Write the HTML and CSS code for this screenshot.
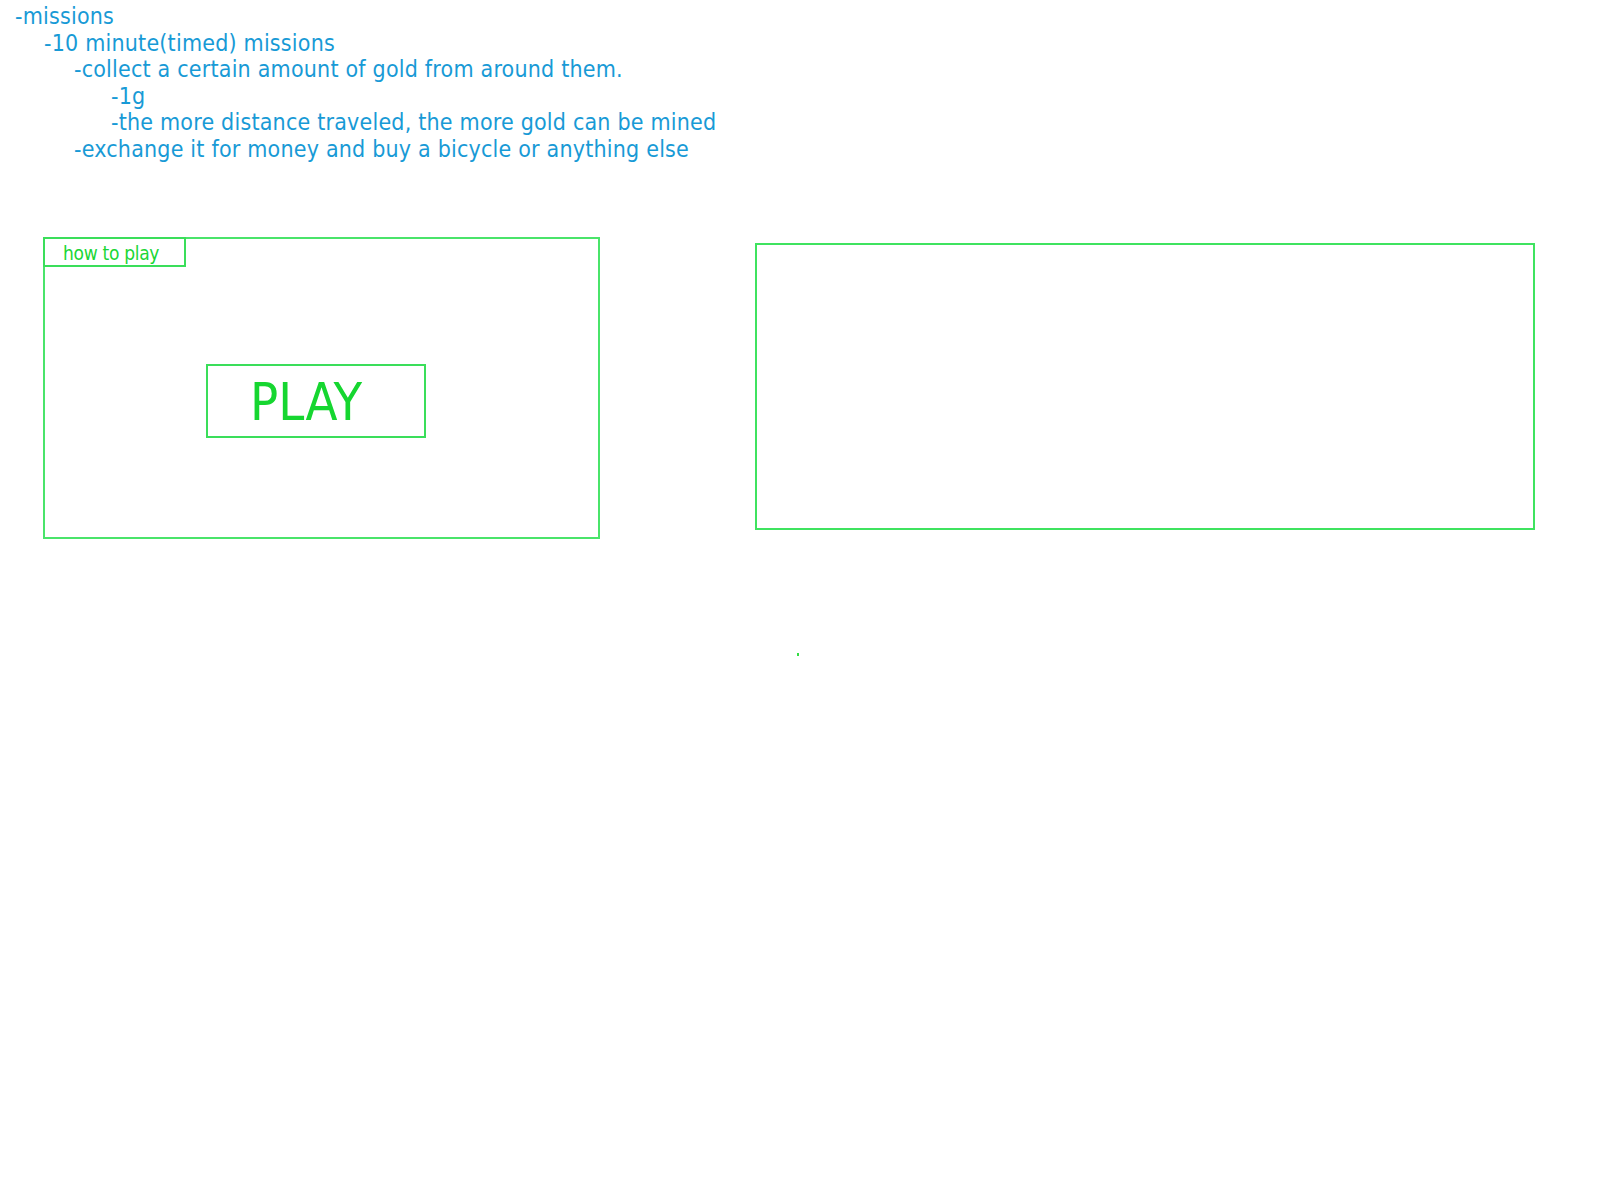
FILE: index.html
```html
<!DOCTYPE html>
<html>
<head>
<meta charset="utf-8">
<link rel="stylesheet" href="styles.css">
</head>
<body>
<div class="notes">
  <div class="l0">-missions</div>
  <div class="l1">-10 minute(timed) missions</div>
  <div class="l2">-collect a certain amount of gold from around them.</div>
  <div class="l3">-1g</div>
  <div class="l3">-the more distance traveled, the more gold can be mined</div>
  <div class="l2">-exchange it for money and buy a bicycle or anything else</div>
</div>
<div class="panels">
  <div class="menu">
    <div class="howto">how to play</div>
    <div class="play">PLAY</div>
  </div>
  <div class="screen"></div>
</div>
<span class="speck"></span>
</body>
</html>
```
FILE: styles.css
```css
html, body {
  margin: 0;
  padding: 0;
  background: #ffffff;
}
body {
  position: relative;
  width: 1600px;
  height: 1200px;
  font-family: "DejaVu Sans Condensed", "DejaVu Sans", sans-serif;
  font-stretch: condensed;
}
.notes {
  color: #189ad6;
  font-size: 23px;
  letter-spacing: 0.2px;
  line-height: 26.5px;
  padding-top: 3px;
}
.l0 { padding-left: 15px; }
.l1 { padding-left: 44px; }
.l2 { padding-left: 74px; }
.l3 { padding-left: 111px; }

.panels {
  display: flex;
  align-items: flex-start;
  margin-top: 75px;
}
.menu {
  box-sizing: border-box;
  width: 557px;
  height: 302px;
  margin-left: 43px;
  border: 2px solid #4ae46a;
}
.howto {
  box-sizing: border-box;
  width: 143px;
  height: 30px;
  margin: -2px 0 0 -2px;
  border: 2px solid #3ade5a;
  color: #1ad636;
  font-size: 19px;
  letter-spacing: -0.3px;
  line-height: 28px;
  padding-left: 18px;
}
.play {
  box-sizing: border-box;
  width: 220px;
  height: 74px;
  margin: 97px 0 0 161px;
  border: 2px solid #3ade5a;
  color: #16d630;
  font-size: 52px;
  line-height: 72px;
  padding-left: 42px;
}
.screen {
  box-sizing: border-box;
  width: 780px;
  height: 287px;
  margin: 6px 0 0 155px;
  border: 2px solid #3fe35f;
}
.speck {
  position: absolute;
  left: 797px;
  top: 653px;
  width: 2px;
  height: 3px;
  background: #33dd44;
}
```
